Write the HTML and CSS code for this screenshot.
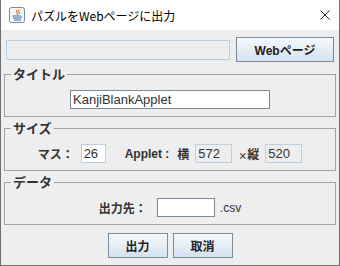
FILE: index.html
```html
<!DOCTYPE html>
<html lang="ja">

<head>
  <meta charset="UTF-8">
  <title>パズルをWebページに出力</title>
  <link rel="stylesheet" href="styles.css">
</head>

<body>
  <div class="window">
    <div class="titlebar">
      <svg class="app-icon" width="16" height="16" viewBox="0 0 16 16">
        <rect x="0.5" y="0.5" width="15" height="15" rx="2" fill="#f4f7fa" stroke="#6f8aa6" />
        <path d="M8 3 C6 5 10 6 8 8 M10 2.5 C9 4 11 5 10 7" stroke="#e07a20" stroke-width="1.2" fill="none" />
        <path d="M3.5 9 H11 M4 11 H11 M5 13 H12" stroke="#3d6a9a" stroke-width="1" fill="none" />
        <path d="M11 9 C13 9 13 11 11 11" stroke="#3d6a9a" fill="none" />
      </svg>
      <span class="title-text">パズルをWebページに出力</span>
      <svg class="close-icon" width="10" height="10" viewBox="0 0 10 10">
        <path d="M0.5 0.5 L9.5 9.5 M9.5 0.5 L0.5 9.5" stroke="#222" stroke-width="1" />
      </svg>
    </div>

    <div class="content">
      <div class="top-row">
        <input class="field field-disabled url-field" type="text" value="" disabled>
        <button class="btn web-btn">Webページ</button>
      </div>

      <fieldset class="group">
        <legend>タイトル</legend>
        <div class="group-row">
          <input class="field title-field" type="text" value="KanjiBlankApplet">
        </div>
      </fieldset>

      <fieldset class="group">
        <legend>サイズ</legend>
        <div class="group-row">
          <span class="label">マス：</span>
          <input class="field field-light mass-field" type="text" value="26">
          <span class="label applet-label">Applet :</span>
          <span class="label">横</span>
          <input class="field field-disabled size-field" type="text" value="572" disabled>
          <span class="label times-label"><span class="times">×</span>縦</span>
          <input class="field field-disabled size-field" type="text" value="520" disabled>
        </div>
      </fieldset>

      <fieldset class="group">
        <legend>データ</legend>
        <div class="group-row">
          <span class="label">出力先：</span>
          <input class="field out-field" type="text" value="">
          <span class="ext">.csv</span>
        </div>
      </fieldset>

      <div class="button-row">
        <button class="btn action-btn">出力</button>
        <button class="btn action-btn">取消</button>
      </div>
    </div>
  </div>
</body>

</html>
```

FILE: styles.css
```css
body {
  margin: 0;
  background-color: #ffffff;
  font-family: "Noto Sans CJK JP", "Liberation Sans", sans-serif;
}

.window {
  width: 340px;
  height: 266px;
  box-sizing: border-box;
  border: 1px solid #6f6f6f;
  border-top: none;
  display: flex;
  flex-direction: column;
}

.titlebar {
  height: 30px;
  background-color: #ffffff;
  display: flex;
  align-items: center;
  padding-left: 8px;
  padding-right: 9px;
}

.app-icon {
  margin-right: 6px;
}

.title-text {
  font-size: 12px;
  color: #000;
  flex: 1;
}

.content {
  flex: 1;
  background-color: #eeeeee;
  padding: 7px 3px 0 3px;
}

.top-row {
  display: flex;
  align-items: center;
  gap: 6px;
  padding: 0 2px;
  margin-bottom: 4px;
}

.field {
  box-sizing: border-box;
  height: 19px;
  border: 1px solid #7a8a99;
  background-color: #ffffff;
  font-family: "Liberation Sans", sans-serif;
  font-size: 13px;
  color: #333;
  padding: 0 2px;
  margin: 0;
  outline: none;
}

.field-disabled {
  border-color: #b8cfe5;
  background-color: #eeeeee;
  color: #333;
}

.field-light {
  border-color: #b8cfe5;
}

.url-field {
  flex: 1;
  height: 20px;
}

.btn {
  box-sizing: border-box;
  height: 25px;
  border: 1px solid #7a8a99;
  background: linear-gradient(to bottom, #f6f9fc, #d5e2f0);
  font-family: "Liberation Sans", "Noto Sans CJK JP", sans-serif;
  font-weight: bold;
  font-size: 12px;
  color: #222;
  padding: 0;
  margin: 0;
}

.web-btn {
  width: 98px;
}

.group {
  margin: 0 0 3px 0;
  border: 1px solid #a3a3a3;
  padding: 8px 4px 7px 4px;
}

.group legend {
  font-size: 13px;
  font-weight: bold;
  line-height: 16px;
  color: #333;
  padding: 0 2px;
  margin-left: 2px;
}

.group-row {
  display: flex;
  justify-content: center;
  align-items: center;
}

.title-field {
  width: 200px;
}

.label {
  font-size: 12px;
  font-weight: bold;
  color: #333;
}

.mass-field {
  width: 25px;
  margin-left: 7px;
}

.applet-label {
  font-family: "Liberation Sans", sans-serif;
  margin-left: 19px;
  margin-right: 8px;
}

.size-field {
  width: 37px;
  margin-left: 6px;
}

.times-label {
  margin-left: 6px;
}

.times {
  font-size: 9px;
}

.out-field {
  width: 58px;
  margin-left: 10px;
}

.ext {
  font-family: "Liberation Sans", sans-serif;
  font-size: 12px;
  color: #333;
  margin-left: 5px;
}

.button-row {
  display: flex;
  justify-content: center;
  gap: 5px;
  margin-top: 8px;
}

.action-btn {
  width: 60px;
}
```
